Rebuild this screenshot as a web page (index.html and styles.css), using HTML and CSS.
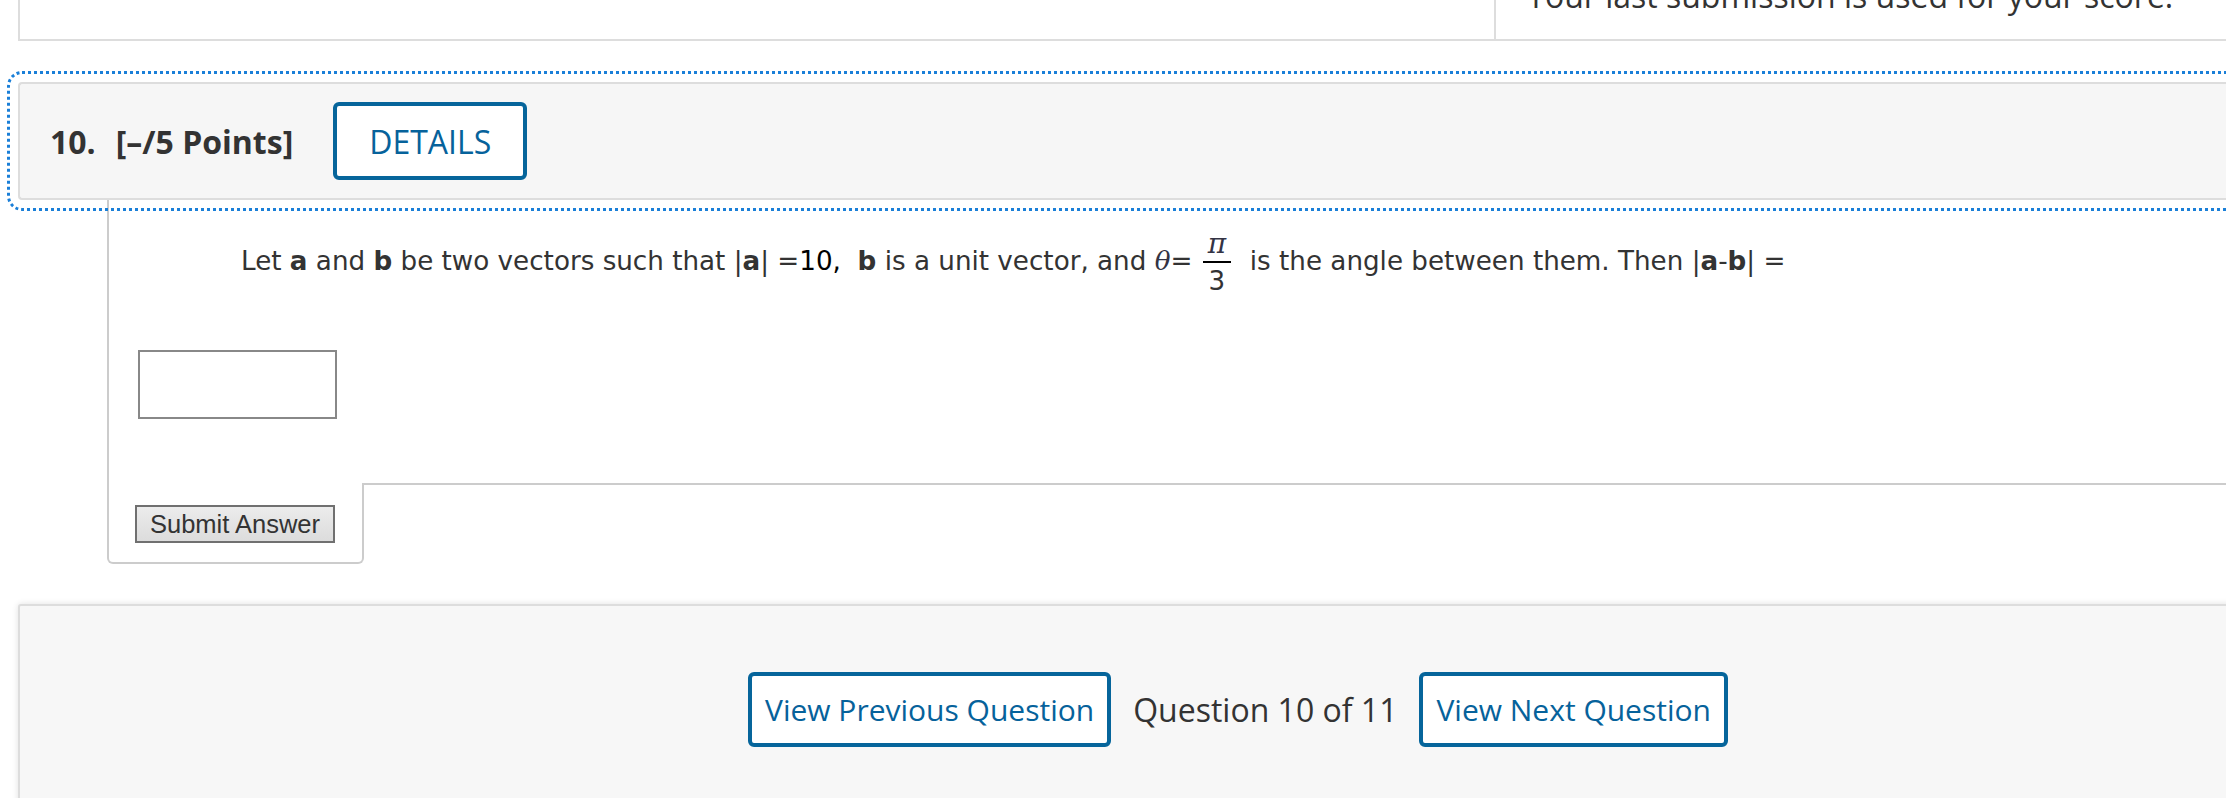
FILE: index.html
```html
<!DOCTYPE html>
<html>
<head>
<meta charset="utf-8">
<link rel="stylesheet" href="styles.css">
</head>
<body>
<div class="page">
  <div class="topbox">
    <div class="top-left"></div>
    <div class="top-right"><p class="score-note">Your last submission is used for your score.</p></div>
  </div>

  <div class="question">
    <div class="qhead">
      <span class="qnum">10.</span><span class="qpoints">[–/5 Points]</span>
      <button class="details-btn">DETAILS</button>
    </div>
    <div class="qbody">
      <div class="qtext">Let <b>a</b> and <b>b</b> be two vectors such that |<b>a</b>| =<span class="val">10,</span>&nbsp; <b>b</b> is a unit vector, and <i class="math">θ</i>=&nbsp;<span class="frac"><span class="num"><i class="math">π</i></span><span class="den">3</span></span>&nbsp; is the angle between them. Then |<b>a</b>-<b>b</b>| =</div>
      <div class="answer"><input class="answer-input" type="text"></div>
    </div>
    <div class="qfoot">
      <div class="submit-cell"><button class="submit-btn">Submit Answer</button></div>
      <div class="foot-rest"></div>
    </div>
  </div>

  <div class="nav">
    <button class="nav-btn">View Previous Question</button>
    <span class="nav-count">Question 10 of 11</span>
    <button class="nav-btn">View Next Question</button>
  </div>
</div>
</body>
</html>
```

FILE: styles.css
```css
html, body {
  margin: 0;
  padding: 0;
  overflow: hidden;
  background: #ffffff;
}

body {
  font-family: "Open Sans", "Liberation Sans", sans-serif;
  color: #333333;
}

.page {
  margin-left: 18px;
  width: 2440px;
}

/* top summary box */
.topbox {
  display: flex;
  height: 39px;
  border-left: 2px solid #dddddd;
  border-bottom: 2px solid #dddddd;
  background: #ffffff;
}

.top-left {
  width: 1474px;
  border-right: 2px solid #dddddd;
}

.top-right {
  flex: 1;
  overflow: hidden;
  padding-left: 31px;
}

.score-note {
  margin: -26px 0 0 0;
  font-size: 32px;
  line-height: normal;
  color: #333333;
  white-space: nowrap;
}

/* question */
.question {
  margin-top: 41px;
}

.qhead {
  display: flex;
  align-items: center;
  height: 114px;
  padding-left: 30px;
  background: #f6f6f6;
  border: 2px solid #dddddd;
  border-right: none;
  border-radius: 4px 0 0 4px;
  outline: 3px dotted #1a7fd8;
  outline-offset: 8px;
}

.qnum,
.qpoints {
  font-size: 32px;
  font-weight: 700;
  color: #333333;
}

.qnum {
  margin-right: 20px;
}

.details-btn {
  margin-left: 40px;
  height: 78px;
  padding: 0 32px;
  background: #ffffff;
  border: 4px solid #06659b;
  border-radius: 6px;
  font-family: "Open Sans", "Liberation Sans", sans-serif;
  font-size: 32px;
  color: #06629b;
  cursor: pointer;
}

.qbody {
  margin-left: 89px;
  border-left: 2px solid #cccccc;
  padding-top: 30px;
  padding-bottom: 64px;
}

.qtext {
  padding-left: 132px;
  font-family: "DejaVu Sans", Verdana, sans-serif;
  font-size: 26.2px;
  color: #333333;
  line-height: 1.2;
}

.qtext b {
  font-weight: 700;
}

.val {
  color: #000000;
}

.math {
  font-family: "DejaVu Serif", "Liberation Serif", serif;
  font-style: italic;
  color: #333344;
}

.frac {
  display: inline-flex;
  flex-direction: column;
  align-items: center;
  vertical-align: middle;
  line-height: 1.0;
  margin: 0 2px;
}

.frac .num {
  padding: 0 5px 3px;
  border-bottom: 2px solid #000000;
  font-size: 28px;
}

.frac .den {
  padding-top: 5px;
}

.answer {
  padding-left: 29px;
  margin-top: 56px;
  line-height: 0;
}

.answer-input {
  box-sizing: border-box;
  width: 199px;
  height: 69px;
  border: 2px solid #888888;
  background: #ffffff;
  margin: 0;
  padding: 0;
}

.qfoot {
  display: flex;
  margin-left: 89px;
}

.submit-cell {
  box-sizing: border-box;
  width: 257px;
  padding: 22px 0 19px 26px;
  border-left: 2px solid #cccccc;
  border-right: 2px solid #cccccc;
  border-bottom: 2px solid #cccccc;
  border-radius: 0 0 6px 6px;
}

.submit-btn {
  display: block;
  box-sizing: border-box;
  width: 200px;
  height: 38px;
  margin: 0;
  padding: 0;
  border: 2px solid #707070;
  background: linear-gradient(#ececec, #dcdcdc);
  font-family: "Liberation Sans", Arial, sans-serif;
  font-size: 25.5px;
  color: #333333;
}

.foot-rest {
  flex: 1;
  border-top: 2px solid #cccccc;
}

/* navigation */
.nav {
  margin-top: 40px;
  height: 207px;
  display: flex;
  align-items: center;
  justify-content: center;
  background: #f7f7f7;
  border: 2px solid #dddddd;
  border-radius: 3px;
  box-shadow: 0 0 6px rgba(0, 0, 0, 0.12);
}

.nav-btn {
  height: 75px;
  padding: 0 13px;
  background: #ffffff;
  border: 4px solid #06659b;
  border-radius: 6px;
  font-family: "Open Sans", "Liberation Sans", sans-serif;
  font-size: 30px;
  color: #06629b;
  cursor: pointer;
}

.nav-count {
  margin: 0 22px;
  font-size: 32px;
  color: #333333;
}
```
